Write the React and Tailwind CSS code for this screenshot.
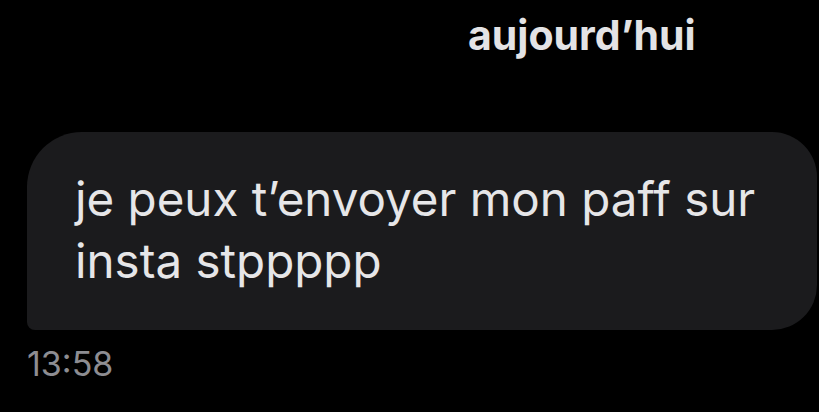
export default function App() {
  return (
    <div className="w-[819px] h-[412px] bg-black overflow-hidden flex flex-col" style={{ fontFamily: "Inter, 'Noto Sans', sans-serif" }}>
      <div className="pl-[468px] pt-[10px] h-[132px]">
        <span className="text-[41px] font-bold leading-[50px] text-[#e3e3e5]">aujourd’hui</span>
      </div>
      <div className="ml-[27px] w-[790px] h-[198px] bg-[#1b1b1d] rounded-tl-[55px] rounded-tr-[45px] rounded-br-[45px] rounded-bl-[8px] pl-[48px] pt-[36px]">
        <p className="text-[47.5px] leading-[62px] text-[#e6e6e8] font-normal">je peux t’envoyer mon paff sur<br />insta stppppp</p>
      </div>
      <div className="pl-[27px] pt-[14px]">
        <span className="text-[34px] leading-[40px] text-[#8d8d92]">13:58</span>
      </div>
    </div>
  );
}
